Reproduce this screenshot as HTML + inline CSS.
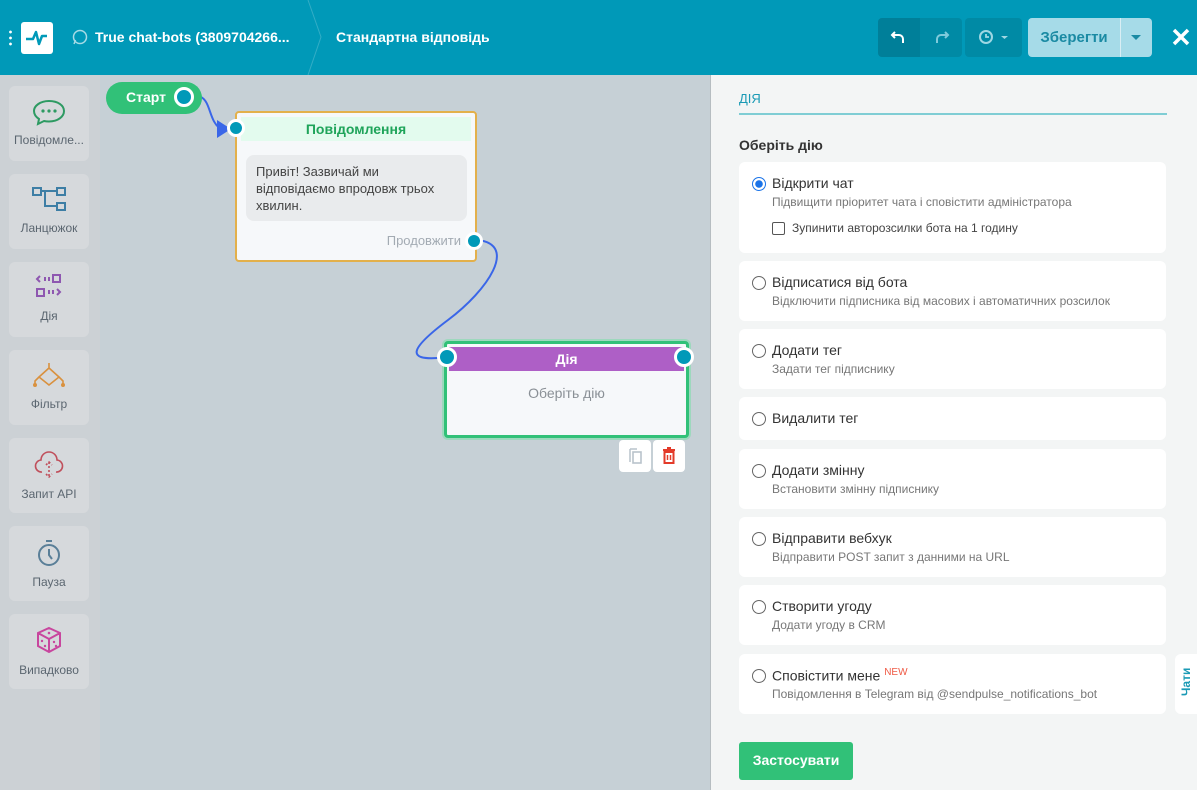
<!DOCTYPE html>
<html><head><meta charset="utf-8"><style>
*{box-sizing:border-box;margin:0;padding:0}
body{width:1197px;height:790px;overflow:hidden;font-family:"Liberation Sans",sans-serif;background:#c6d0d6;position:relative}
.hdr{position:absolute;left:0;top:0;width:1197px;height:75px;background:#0099b8;color:#fff}
.side{position:absolute;left:0;top:75px;width:100px;height:715px;background:#ccd1d5}
.si{position:absolute;left:9px;width:80px;height:75px;background:#d6d9dc;border-radius:6px;text-align:center;font-size:12px;color:#5b6670}
.si svg{display:block;margin:12px auto 7px}
.panel{position:absolute;left:710px;top:75px;width:487px;height:715px;background:#f3f5f5;border-left:1px solid #b6bdc1}
.card{position:absolute;left:28px;width:427px;background:#fff;border-radius:6px}
.card .t{position:absolute;left:33px;top:13px;font-size:14px;color:#333}
.card .d{position:absolute;left:33px;top:33px;font-size:12px;color:#777}
.rb{position:absolute;left:13px;top:15px;width:14px;height:14px;border:1.5px solid #666;border-radius:50%}
.dot{position:absolute;width:16px;height:16px;border-radius:50%;background:#0099b8;border:3px solid #fff}
</style></head><body>
<div class="hdr">
 <div style="position:absolute;left:9px;top:29px;width:3px;height:18px;background:radial-gradient(circle,#fff 1.2px,transparent 1.6px) 0 0/3px 6px"></div>
 <div style="position:absolute;left:21px;top:22px;width:32px;height:32px;background:#fff;border-radius:3px">
  <svg width="32" height="32"><path d="M5 17h7l3-7 3 12 3-8h5" fill="none" stroke="#0099b8" stroke-width="2.5" stroke-linejoin="round"/></svg></div>
 <svg style="position:absolute;left:72px;top:29px" width="16" height="16"><circle cx="8" cy="8" r="6.5" fill="none" stroke="#a8dbe6" stroke-width="1.5"/><path d="M2 15l1.5-4" stroke="#a8dbe6" stroke-width="1.5"/></svg>
 <div style="position:absolute;left:95px;top:29px;font-size:14px;font-weight:bold">True chat-bots (3809704266...</div>
 <svg style="position:absolute;left:305px;top:0" width="20" height="75"><path d="M3 0L16 37L3 75" fill="none" stroke="#33adc6" stroke-width="1"/></svg>
 <div style="position:absolute;left:336px;top:29px;font-size:14px;font-weight:bold">Стандартна відповідь</div>
 <div style="position:absolute;left:878px;top:18px;width:42px;height:39px;background:#007f99;border-radius:4px 0 0 4px"></div>
 <div style="position:absolute;left:920px;top:18px;width:42px;height:39px;background:#008aa5;border-radius:0 4px 4px 0"></div>
 <svg style="position:absolute;left:890px;top:28px" width="18" height="18"><path d="M5 4L2 7l3 3M2 7h7a4 4 0 0 1 4 4v4" fill="none" stroke="#fff" stroke-width="2"/></svg>
 <svg style="position:absolute;left:932px;top:28px" width="18" height="18"><path d="M13 4l3 3-3 3M16 7H9a4 4 0 0 0-4 4v4" fill="none" stroke="#7fcadb" stroke-width="2"/></svg>
 <div style="position:absolute;left:965px;top:18px;width:57px;height:39px;background:#008aa5;border-radius:4px"></div>
 <svg style="position:absolute;left:977px;top:28px" width="40" height="18"><circle cx="9" cy="9" r="6" fill="none" stroke="#9fd7e3" stroke-width="2"/><path d="M9 6v3h3" stroke="#9fd7e3" stroke-width="1.8" fill="none"/><path d="M24 8h7l-3.5 3z" fill="#9fd7e3"/></svg>
 <div style="position:absolute;left:1028px;top:18px;width:124px;height:39px;background:#a6dbe8;border-radius:4px"></div>
 <div style="position:absolute;left:1120px;top:18px;width:1px;height:39px;background:#d9eef4"></div>
 <div style="position:absolute;left:1028px;top:29px;width:92px;text-align:center;font-size:15px;font-weight:bold;color:#1a8aa3">Зберегти</div>
 <svg style="position:absolute;left:1131px;top:35px" width="12" height="6"><path d="M0 0h10l-5 5z" fill="#1a8aa3"/></svg>
 <svg style="position:absolute;left:1172px;top:28px" width="18" height="18"><path d="M2 2l14 14M16 2L2 16" stroke="#fff" stroke-width="3.5"/></svg>
</div>

<div class="side">
 <div class="si" style="top:11px"><svg width="36" height="28"><path d="M18 3C9 3 3 8 3 13c0 3 2 6 5 8l-1 5 6-3c2 .5 3 .5 5 .5 9 0 15-5 15-10.5S27 3 18 3z" fill="none" stroke="#2d9a62" stroke-width="2"/><circle cx="12" cy="13" r="1.6" fill="#2d9a62"/><circle cx="18" cy="13" r="1.6" fill="#2d9a62"/><circle cx="24" cy="13" r="1.6" fill="#2d9a62"/></svg>Повідомле...</div>
 <div class="si" style="top:99px"><svg width="36" height="28"><rect x="2" y="2" width="8" height="7" fill="none" stroke="#3d7ea5" stroke-width="2"/><rect x="26" y="2" width="8" height="7" fill="none" stroke="#3d7ea5" stroke-width="2"/><rect x="26" y="17" width="8" height="7" fill="none" stroke="#3d7ea5" stroke-width="2"/><path d="M10 5h16M14 5v15h12" fill="none" stroke="#3d7ea5" stroke-width="2"/></svg>Ланцюжок</div>
 <div class="si" style="top:187px"><svg width="36" height="28"><path d="M9 2l-3 3 3 3" fill="none" stroke="#8e57b0" stroke-width="2"/><rect x="13" y="3" width="2" height="4" fill="#8e57b0"/><rect x="17" y="3" width="2" height="4" fill="#8e57b0"/><rect x="22" y="1" width="7" height="7" fill="none" stroke="#8e57b0" stroke-width="2"/><rect x="6" y="15" width="7" height="7" fill="none" stroke="#8e57b0" stroke-width="2"/><rect x="17" y="16" width="2" height="4" fill="#8e57b0"/><rect x="21" y="16" width="2" height="4" fill="#8e57b0"/><path d="M26 15l3 3-3 3" fill="none" stroke="#8e57b0" stroke-width="2"/></svg>Дія</div>
 <div class="si" style="top:275px"><svg width="36" height="28"><path d="M18 1v5M8 15l10-9 10 9-10 8zM8 15l-4 4v4M28 15l4 4v4" fill="none" stroke="#d9913f" stroke-width="1.6"/><circle cx="4" cy="23" r="2" fill="#d9913f"/><circle cx="32" cy="23" r="2" fill="#d9913f"/></svg>Фільтр</div>
 <div class="si" style="top:363px"><svg width="36" height="30"><path d="M11 22a6 6 0 0 1-1-12 8 8 0 0 1 16 0 6 6 0 0 1-1 12" fill="none" stroke="#c0505c" stroke-width="1.6"/><path d="M18 12v14M15 15l3-3 3 3M15 24l3 3 3-3" fill="none" stroke="#c0505c" stroke-width="1.6" stroke-dasharray="2 2"/></svg>Запит API</div>
 <div class="si" style="top:451px"><svg width="36" height="30"><circle cx="18" cy="17" r="10" fill="none" stroke="#5a7f98" stroke-width="2"/><path d="M15 3h6M18 11v6l3 4" fill="none" stroke="#5a7f98" stroke-width="2"/></svg>Пауза</div>
 <div class="si" style="top:539px"><svg width="36" height="30"><path d="M18 2l11 5v13l-11 6-11-6V7zM7 7l11 6 11-6M18 13v13" fill="none" stroke="#c8469e" stroke-width="2"/><circle cx="18" cy="7" r="1.3" fill="#c8469e"/><circle cx="11" cy="15" r="1.2" fill="#c8469e"/><circle cx="14" cy="20" r="1.2" fill="#c8469e"/><circle cx="23" cy="16" r="1.2" fill="#c8469e"/><circle cx="25" cy="20" r="1.2" fill="#c8469e"/></svg>Випадково</div>
</div>

<svg style="position:absolute;left:0;top:0" width="710" height="790"><path d="M201 97c10 5 8 25 20 32" fill="none" stroke="#3a66e8" stroke-width="2"/><path d="M217 120l14 9-14 9z" fill="#3a66e8"/><path d="M478 240c40 5 10 50-30 80s-40 40-10 38" fill="none" stroke="#3a66e8" stroke-width="2"/></svg>

<div style="position:absolute;left:106px;top:82px;width:96px;height:32px;background:#31c178;border-radius:16px;color:#fff;font-weight:bold;font-size:14px;padding:7px 0 0 20px">Старт</div>
<div class="dot" style="left:174px;top:87px;width:20px;height:20px"></div>

<div style="position:absolute;left:235px;top:111px;width:242px;height:151px;background:#f6f8fa;border:2px solid #e3b04b;border-radius:4px">
 <div style="position:absolute;left:4px;top:4px;right:4px;height:24px;background:#e3fbee;text-align:center;color:#1fa45a;font-weight:bold;font-size:14px;padding-top:4px">Повідомлення</div>
 <div style="position:absolute;left:9px;top:42px;width:221px;height:66px;background:#e9ebed;border-radius:8px;font-size:13px;color:#444;padding:8px 10px;line-height:17px">Привіт! Зазвичай ми відповідаємо впродовж трьох хвилин.</div>
 <div style="position:absolute;right:14px;top:120px;font-size:13px;color:#a3abb3">Продовжити</div>
</div>
<div class="dot" style="left:227px;top:119px;width:18px;height:18px"></div>
<div class="dot" style="left:465px;top:232px;width:18px;height:18px"></div>

<div style="position:absolute;left:444px;top:341px;width:245px;height:97px;background:#f6f8fa;border:3px solid #31c178;border-radius:4px;box-shadow:0 0 0 2px #9dd8bd">
 <div style="position:absolute;left:2px;top:3px;right:2px;height:24px;background:#ae5fc6;color:#fff;text-align:center;font-weight:bold;font-size:14px;padding-top:4px">Дія</div>
 <div style="position:absolute;left:0;right:0;top:41px;text-align:center;color:#8a9096;font-size:14px">Оберіть дію</div>
</div>
<div class="dot" style="left:437px;top:347px;width:20px;height:20px"></div>
<div class="dot" style="left:674px;top:347px;width:20px;height:20px"></div>
<div style="position:absolute;left:619px;top:440px;width:32px;height:32px;background:#fff;border-radius:4px"><svg width="32" height="32"><path d="M11 9v13M11 9h7" stroke="#b9c3cb" stroke-width="1.5" fill="none"/><rect x="14" y="12" width="8" height="11" fill="none" stroke="#b9c3cb" stroke-width="1.6"/></svg></div>
<div style="position:absolute;left:653px;top:440px;width:32px;height:32px;background:#fff;border-radius:4px"><svg width="32" height="32"><path d="M10 10h12M14 8h4" stroke="#e33b2a" stroke-width="2"/><rect x="11.5" y="12" width="9" height="11" fill="none" stroke="#e33b2a" stroke-width="2"/><path d="M14.5 15v5M17.5 15v5" stroke="#e33b2a" stroke-width="1.5"/></svg></div>

<div class="panel">
 <div style="position:absolute;left:28px;top:16px;font-size:13px;color:#1a9ab5">ДІЯ</div>
 <div style="position:absolute;left:28px;top:38px;width:428px;height:2px;background:#7fcdd4"></div>
 <div style="position:absolute;left:28px;top:62px;font-size:14px;font-weight:bold;color:#333">Оберіть дію</div>
 <div class="card" style="top:87px;height:91px"><div class="rb" style="border-color:#1a73e8;background:radial-gradient(circle,#1a73e8 3.5px,#fff 4px)"></div><div class="t">Відкрити чат</div><div class="d">Підвищити пріоритет чата і сповістити адміністратора</div>
  <div style="position:absolute;left:33px;top:60px;width:13px;height:13px;border:1.5px solid #555;border-radius:2px"></div><div style="position:absolute;left:53px;top:59px;font-size:12px;color:#444">Зупинити авторозсилки бота на 1 годину</div></div>
 <div class="card" style="top:186px;height:60px"><div class="rb"></div><div class="t">Відписатися від бота</div><div class="d">Відключити підписника від масових і автоматичних розсилок</div></div>
 <div class="card" style="top:254px;height:60px"><div class="rb"></div><div class="t">Додати тег</div><div class="d">Задати тег підписнику</div></div>
 <div class="card" style="top:322px;height:43px"><div class="rb"></div><div class="t">Видалити тег</div></div>
 <div class="card" style="top:374px;height:60px"><div class="rb"></div><div class="t">Додати змінну</div><div class="d">Встановити змінну підписнику</div></div>
 <div class="card" style="top:442px;height:60px"><div class="rb"></div><div class="t">Відправити вебхук</div><div class="d">Відправити POST запит з данними на URL</div></div>
 <div class="card" style="top:510px;height:60px"><div class="rb"></div><div class="t">Створити угоду</div><div class="d">Додати угоду в CRM</div></div>
 <div class="card" style="top:579px;height:60px"><div class="rb"></div><div class="t">Сповістити мене <sup style="color:#ef5a45;font-size:10px">NEW</sup></div><div class="d">Повідомлення в Telegram від @sendpulse_notifications_bot</div></div>
 <div style="position:absolute;left:464px;top:579px;width:23px;height:60px;background:#fff;border-radius:6px 0 0 6px"><div style="position:absolute;left:4px;top:42px;transform:rotate(-90deg);transform-origin:left top;font-size:12px;font-weight:bold;color:#1a9ab5">Чати</div></div>
 <div style="position:absolute;left:28px;top:667px;width:114px;height:38px;background:#31c178;border-radius:3px;color:#fff;font-weight:bold;font-size:14px;text-align:center;padding-top:10px">Застосувати</div>
</div>
</body></html>
